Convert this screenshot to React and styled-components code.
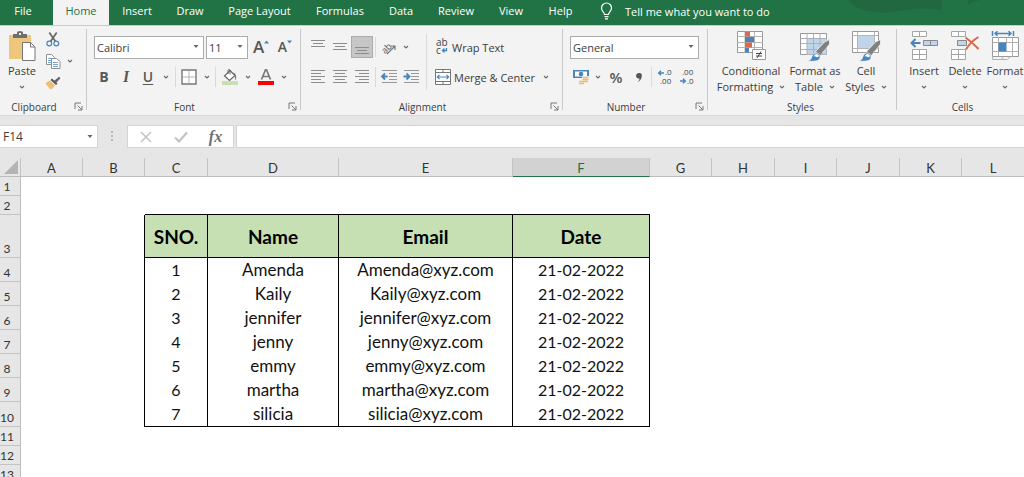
import React from "react";
import styled, { createGlobalStyle, css } from "styled-components";

const Global = createGlobalStyle`
  *, *::before, *::after { box-sizing: border-box; }
  html, body { margin: 0; overflow: hidden; background: #fff; }
  body, button, input, select {
    font-family: "Open Sans", "Noto Sans", sans-serif;
    font-size: 11px;
    color: #3c3c3c;
  }
`;

const green = "#217346";
const blue = "#4a84bd";

/* ---------- shell ---------- */

const Page = styled.div`
  display: flex;
  flex-direction: column;
  height: 100vh;
  overflow: hidden;
`;

const TabBar = styled.nav`
  display: flex;
  flex: none;
  height: 25px;
  background: ${green};
  overflow: hidden;
`;

const Tab = styled.button`
  flex: none;
  width: ${(p) => p.$w}px;
  padding: 0 0 3px;
  border: 0;
  background: ${(p) => (p.$active ? "#f3f3f3" : "transparent")};
  color: ${(p) => (p.$active ? green : "#fff")};
  margin-left: ${(p) => (p.$active ? 7 : 0)}px;
  line-height: 20px;
  text-align: center;
  white-space: nowrap;
`;

const TellMe = styled.button`
  display: flex;
  align-items: center;
  gap: 12px;
  flex: none;
  padding: 0 0 3px 15px;
  border: 0;
  background: transparent;
  color: #fff;
  white-space: nowrap;
`;

const Flourish = styled.svg`
  flex: 1;
  min-width: 0;
  height: 25px;
`;

/* ---------- ribbon ---------- */

const Ribbon = styled.div`
  display: flex;
  flex: none;
  height: 90px;
  background: #f3f3f3;
  border-top: 1px solid #bcd3c6;
  overflow: hidden;
`;

const Group = styled.section`
  display: flex;
  flex-direction: column;
  flex: none;
  width: ${(p) => p.$w}px;
`;

const GroupRule = styled.div`
  flex: none;
  width: 1px;
  margin: 3px 0 5px;
  background: #c9c9c9;
`;

const GroupBody = styled.div`
  display: flex;
  flex: 1;
  padding: 0 ${(p) => p.$pad || 0}px;
`;

const GroupFoot = styled.div`
  display: flex;
  align-items: center;
  height: 17px;
  padding-right: 3px;
`;

const GroupName = styled.span`
  flex: 1;
  padding-right: ${(p) => (p.$launcher ? 6 : 0)}px;
  text-align: center;
  font-size: 10px;
  line-height: 16px;
`;

const Launcher = styled.button`
  display: flex;
  padding: 0;
  border: 0;
  background: transparent;
`;

const Rows = styled.div`
  display: flex;
  flex-direction: column;
  gap: 8px;
  padding-top: 10px;
`;

const Row = styled.div`
  display: flex;
  align-items: center;
  height: 22px;
  gap: ${(p) => p.$gap || 0}px;
`;

const Tool = styled.button`
  display: flex;
  flex: none;
  align-items: center;
  justify-content: ${(p) => (p.$wide ? "flex-start" : "center")};
  gap: ${(p) => (p.$tight ? 0 : 3)}px;
  width: ${(p) => p.$w || 22}px;
  height: 22px;
  padding: 0;
  border: 1px solid ${(p) => (p.$on ? "#ababab" : "transparent")};
  background: ${(p) => (p.$on ? "#c6c6c6" : "transparent")};
  white-space: nowrap;
`;

const Glyph = styled.span`
  font-size: ${(p) => p.$size || 14}px;
  line-height: 20px;
  color: #585858;
  font-weight: ${(p) => (p.$bold ? 700 : 600)};
  ${(p) => p.$italic && css`font-style: italic; font-family: "Liberation Serif", serif;`}
  ${(p) => p.$under && css`text-decoration: underline; text-underline-offset: 2px;`}
`;

const Rule = styled.div`
  flex: none;
  width: 1px;
  height: 20px;
  margin: 0 ${(p) => p.$m || 0}px;
  background: #dadada;
`;

const TallRule = styled(Rule)`
  height: 56px;
  margin: 8px 7px 0 4px;
`;

const Big = styled.button`
  display: flex;
  flex-direction: column;
  align-items: center;
  flex: none;
  width: ${(p) => p.$w}px;
  padding: 5px 0 0;
  border: 0;
  background: transparent;
  line-height: 16px;
  white-space: nowrap;
`;

const BigLine = styled.span`
  display: flex;
  align-items: center;
  justify-content: center;
  gap: 6px;
  height: 16px;
`;

const SmallStack = styled.div`
  display: flex;
  flex-direction: column;
  padding-top: 2px;
`;

const Field = styled.div`
  display: grid;
  flex: none;
  align-items: center;
  width: ${(p) => p.$w}px;
  height: ${(p) => p.$h || 23}px;
  background: #fff;
  border: 1px solid #ababab;

  > select, > input, > svg { grid-area: 1 / 1; }
  > svg { justify-self: end; margin-right: 4px; pointer-events: none; }
`;

const Select = styled.select`
  appearance: none;
  width: 100%;
  height: 100%;
  padding: 0 2px;
  border: 0;
  background: transparent;
  outline: 0;
`;

/* ---------- formula bar ---------- */

const FormulaBar = styled.div`
  display: flex;
  flex: none;
  align-items: flex-start;
  height: 43px;
  padding-top: 9px;
  background: #e6e6e6;
  border-top: 1px solid #d8d8d8;
`;

const NameField = styled(Field)`
  border-color: #d4d4d4;
  border-left: 0;
`;

const TextInput = styled.input`
  width: 100%;
  height: 100%;
  padding: 0 3px;
  border: 0;
  background: transparent;
  font-size: 12px;
  outline: 0;
`;

const Grip = styled.svg`
  flex: none;
  margin: 5px 13px 0 12px;
`;

const EntryTools = styled.div`
  display: flex;
  align-items: center;
  justify-content: space-around;
  flex: none;
  width: 107px;
  height: 23px;
  margin-right: 2px;
  background: #fff;
  border: 1px solid #d4d4d4;
`;

const FormulaInput = styled(TextInput)`
  flex: 1;
  width: auto;
  min-width: 0;
  height: 23px;
  background: #fff;
  border: 1px solid #d4d4d4;
  border-right: 0;
`;

const Fx = styled.span`
  font: italic 700 16px/20px "Liberation Serif", serif;
  color: #707070;
`;

/* ---------- sheet ---------- */

const SheetArea = styled.main`
  flex: 1;
  min-height: 0;
  overflow: hidden;
`;

const Sheet = styled.table`
  table-layout: fixed;
  width: 1025px;
  border-collapse: separate;
  border-spacing: 0;
  font-family: Lato, "Open Sans", sans-serif;
  color: #111;
`;

const Col = styled.col`
  width: ${(p) => p.$w}px;
`;

const SheetRow = styled.tr`
  height: ${(p) => p.$h}px;
`;

const ColHead = styled.th`
  padding: 2px 0 0;
  font: 400 13px/14px Lato, sans-serif;
  color: ${(p) => (p.$on ? green : "#333")};
  background: ${(p) => (p.$on ? "#d2d2d2" : "#e6e6e6")};
  border-right: 1px solid #c3c3c3;
  border-bottom: 1px solid ${(p) => (p.$on ? green : "#bdbdbd")};
`;

const Corner = styled.th`
  padding: 0;
  background: #e6e6e6;
  border-right: 1px solid #c3c3c3;
  border-bottom: 1px solid #bdbdbd;
  vertical-align: bottom;

  > svg { display: block; margin: 0 0 2px 4px; }
`;

const RowHead = styled.th`
  padding: 0 6px 0 0;
  overflow: hidden;
  font: 400 12px/17px Lato, sans-serif;
  color: #333;
  vertical-align: bottom;
  background: #e6e6e6;
  border-right: 1px solid #bdbdbd;
  border-bottom: 1px solid #c3c3c3;
`;

const Cell = styled.td`
  padding: 0;
  overflow: hidden;
  text-align: center;
  font-size: ${(p) => (p.$word ? 17 : 16)}px;
  line-height: 22px;
  ${(p) => p.$title && css`padding-top: 2px; font-size: 19px; font-weight: 700; color: #000; background: #c6e0b4;`}
  ${(p) => p.$right && css`border-right: 1px solid #000;`}
  ${(p) => p.$bottom && css`border-bottom: 1px solid #000;`}
`;

/* ---------- icons ---------- */

const IconSvg = styled.svg`
  flex: none;
  overflow: visible;
`;

const Icon = ({ w = 16, h = w, children }) => (
  <IconSvg width={w} height={h} viewBox={`0 0 ${w} ${h}`} fill="none" aria-hidden="true">
    {children}
  </IconSvg>
);

const Chevron = () => (
  <Icon w={6} h={6}>
    <path d="M1 2 3 4 5 2" stroke="#6a6a6a" strokeWidth="1.1" />
  </Icon>
);

const Arrow = () => (
  <Icon w={6} h={4}>
    <path d="M.5 0h5L3 3z" fill="#666" />
  </Icon>
);

const Drop = ({ w = 12, label }) => (
  <Tool $w={w} aria-label={label}>
    <Chevron />
  </Tool>
);

const Bulb = () => (
  <Icon w={13} h={18}>
    <path d="M4.500 12.500c0-2-3-3-3-6.500a5 5 0 0 1 10 0c0 3.500-3 4.500-3 6.500zM4.500 14.700h4M5 16.800h3" stroke="#fff" strokeWidth="1.200" />
  </Icon>
);

const LauncherIcon = () => (
  <Icon w={9} h={9}>
    <path d="M1 7V1h6M3.500 3.500 7.500 7.500M8 4v4H4" stroke="#777" />
  </Icon>
);

const PasteIcon = () => (
  <Icon w={28} h={32}>
    <path d="M1 4h22v24H1z" fill="#eec67c" />
    <path d="M5 3h4V1.500Q9 0 12 0t3 1.500V3h4v4H5z" fill="#6f6f6f" />
    <path d="M11 2h2v2h-2z" fill="#eee" />
    <path d="M14.500 11.500h8l4.500 4.500v13.500H14.500z" fill="#fff" stroke="#777" />
    <path d="M22.500 11.500V16H27" stroke="#777" />
  </Icon>
);

const CutIcon = () => (
  <Icon w={14} h={15}>
    <path d="M3.300.5 9.500 9.500M10.700.5 4.500 9.500" stroke="#666" strokeWidth="1.700" />
    <circle cx="3.300" cy="11.500" r="2.400" stroke={blue} strokeWidth="1.200" />
    <circle cx="10.300" cy="11.500" r="2.400" stroke={blue} strokeWidth="1.200" />
  </Icon>
);

const CopyIcon = () => (
  <Icon w={15} h={15}>
    <path d="M.5.500h5l3 3v7h-8z" fill="#fff" stroke="#909090" />
    <path d="M2 4.500h4M2 6.500h4M2 8.500h3" stroke="#7ba5d0" />
    <path d="M5.500 4.500h5l3.500 3v7H5.500z" fill="#fff" stroke="#909090" />
    <path d="M7 8.500h5M7 10.500h5M7 12.500h5" stroke="#7ba5d0" />
  </Icon>
);

const BrushIcon = () => (
  <Icon w={16} h={14}>
    <path d="M.5 7 5 4.500l5 5L6.500 13.500Q4 13 .5 7z" fill="#eebf70" />
    <path d="M5.500 4 7 2.500l5.500 5L11 9z" fill="#555" />
    <path d="m9 5 5-4.200 1.500 1.400L11 7z" fill="#666" />
  </Icon>
);

const Lines = ({ rows }) => (
  <Icon w={14} h={16}>
    {rows.map(([x, y, w]) => (
      <path key={y} d={`M${x} ${y + 0.5}h${w}`} stroke="#8c8c8c" />
    ))}
  </Icon>
);

const GrowIcon = ({ size, up }) => (
  <>
    <Glyph $size={size}>A</Glyph>
    <Icon w={5} h={14}>
      <path d={up ? "M0 3.500h5L2.500.5z" : "M0 .5h5L2.500 3.500z"} fill={blue} />
    </Icon>
  </>
);

const BorderIcon = () => (
  <Icon w={16}>
    <path d="M1 1h14v14H1z" fill="#fff" stroke="#777" strokeWidth="1.400" />
    <path d="M8 2v12M2 8h12" stroke="#b5b5b5" />
  </Icon>
);

const FillIcon = () => (
  <Icon w={16}>
    <path d="M8 1.500 13 6.500 7.500 11.500 2.500 7z" fill="#fff" stroke="#666" strokeWidth="1.200" />
    <path d="M6 5V1.500Q6 .5 7 .5t1 1v4" stroke="#666" />
    <path d="M11.500 3.500Q15 5 14 11q-1.500-1-1-4z" fill={blue} />
    <path d="M0 12h16v4H0z" fill="#c6e0b4" />
  </Icon>
);

const FontColorIcon = () => (
  <Icon w={16}>
    <path d="M3.500 10.500 7.500.8h1L12.500 10.500M5 7.500h6" stroke="#777" strokeWidth="1.700" />
    <path d="M0 12h16v4H0z" fill="#f00" />
  </Icon>
);

const OrientIcon = () => (
  <Icon w={15} h={15}>
    <text x="-1" y="11" transform="rotate(-45 5 8)" fontSize="9" fontFamily="Open Sans" fill="#555">ab</text>
    <path d="M5 14 12.500 6.500M9 6h4v4" stroke="#777" strokeWidth="1.200" />
  </Icon>
);

const WrapIcon = () => (
  <Icon w={14} h={16}>
    <text x="1" y="7" fontSize="10" fontFamily="Open Sans" fill="#444">ab</text>
    <text x="1" y="15" fontSize="10" fontFamily="Open Sans" fill="#444">c</text>
    <path d="M11.500 9v2.500H8M9.500 9.500l-2 2 2 2" stroke={blue} strokeWidth="1.300" />
  </Icon>
);

const MergeIcon = () => (
  <Icon w={16}>
    <path d="M.5.500h15v15H.5zM.5 3.500h15M.5 12.500h15M8 .5v3M8 12.500v3" fill="#fff" stroke="#777" />
    <path d="M2.500 8h11M4.500 5.800 2.300 8l2.200 2.200M11.500 5.800 13.700 8l-2.200 2.200" stroke={blue} strokeWidth="1.200" />
  </Icon>
);

const IndentIcon = ({ right }) => (
  <Icon w={16}>
    <path d="M1 1.500h15M8 4.500h8M8 7.500h8M8 10.500h8M1 13.500h15" stroke="#979797" />
    <path d={right ? "M.5 7.500h5M3.500 4.500l3 3-3 3" : "M1.500 7.500h5M4 4.500l-3 3 3 3"} stroke={blue} strokeWidth="1.800" />
  </Icon>
);

const MoneyIcon = () => (
  <Icon w={16}>
    <path d="M0 1h16v8H0z" fill={blue} />
    <path d="M2 2.500h12v5H2z" fill="#fff" />
    <circle cx="8" cy="5" r="2.300" fill={blue} />
    <path d="M9 7h7v8H6v-5h3z" fill="#f3f3f3" />
    <path d="M9.500 8.500h6M9.500 10.500h6M6 12.500h5M11 12.500h4M6 14.500h5" stroke="#e9bc74" strokeWidth="1.500" />
  </Icon>
);

const DecimalIcon = ({ less }) => (
  <Icon w={16}>
    <text x={less ? 3 : 8} y="6" fontSize="8" fontFamily="Open Sans" fill="#444">{less ? ".00" : ".0"}</text>
    <text x={less ? 8 : 3} y="15" fontSize="8" fontFamily="Open Sans" fill="#444">{less ? ".0" : ".00"}</text>
    <path d={less ? "M1 12h5M4 9.800l2.200 2.200L4 14.200" : "M2 4h5M4 1.800 1.800 4 4 6.200"} stroke={blue} strokeWidth="1.500" />
  </Icon>
);

const CommaIcon = () => (
  <Icon w={7} h={11}>
    <path d="M3.200 1a2.500 2.500 0 0 1 2.600 2.700c0 3-1.500 5-4.300 6.300 1.500-1.300 2-2.300 2-3.500A2.800 2.800 0 1 1 3.200 1z" fill="#555" />
  </Icon>
);

const ConditionalIcon = () => (
  <Icon w={30} h={32}>
    <path d="M1.500.5h25v21h-25z" fill="#fff" stroke="#999" />
    <path d="M1.500 5.500h25M1.500 11.500h25M1.500 16.500h25M9 .5v21M18.500.5v21" stroke="#b5b5b5" />
    <path d="M9 1h5v4.500H9zM9 11.500h7v5H9z" fill="#d9694a" />
    <path d="M9 6h9v5H9zM9 17h4v4.500H9z" fill={blue} />
    <path d="M16.500 18.500h13v10h-13z" fill="#fff" stroke="#999" />
    <path d="M20 22.500h6M20 25h6M25 20.500l-4 6.500" stroke="#444" />
  </Icon>
);

const PaintBrush = () => (
  <>
    <path d="m17.500 19.500 8-8.500 5-2.500v4.500l-4.500 6-4.500 4z" fill="#808080" stroke="#f3f3f3" strokeWidth=".8" />
    <path d="M17 20.500 20 18l3.500 3.500-2.500 3z" fill="#808080" />
    <path d="M9 30q3.500-1.500 4-4.500t4-3.500 4 3-2.500 4.500-9.500.5z" fill={blue} stroke="#f3f3f3" strokeWidth=".6" />
    <path d="M14.500 25.500q1-2.500 3-2.500t2.500 2q-1 2-2.500 1t-3-.5z" fill="#fff" />
  </>
);

const FormatTableIcon = () => (
  <Icon w={32}>
    <path d="M1.500 2.500h26v21h-26z" fill="#fff" stroke="#999" />
    <path d="M8 8h19.500v15.500H8z" fill="#c0d4ea" />
    <path d="M1.500 7.500h26M1.500 12.500h26M1.500 18.500h26M8 2.500v21M14.500 2.500v21M21 2.500v21" stroke="#aab1b8" />
    <PaintBrush />
  </Icon>
);

const CellStylesIcon = () => (
  <Icon w={32}>
    <path d="M2.500.5h26v21h-26z" fill="#fff" stroke="#999" />
    <path d="M2.500 4.500h26M2.500 17.500h26M7.500.5v21M24.500.5v21" stroke="#b5b5b5" />
    <path d="M8 5h16v12H8z" fill="#c0d4ea" />
    <PaintBrush />
  </Icon>
);

const InsertIcon = () => (
  <Icon w={30} h={32}>
    <path d="M3.500.5h14v5h-14zM3.500 18.500h14v10h-14zM3.500 23.500h14M10.500.5v5M10.500 18.500v10" fill="#fff" stroke="#a5a5a5" />
    <path d="M14.500 9.500h14v5h-14zM21.500 9.500v5" fill="#c0d4ea" stroke="#888" />
    <path d="M2.500 12h9M6.500 8l-4 4 4 4" stroke={blue} strokeWidth="2" />
  </Icon>
);

const DeleteIcon = () => (
  <Icon w={30} h={32}>
    <path d="M1.500.5h14v5h-14zM1.500 18.500h14v10h-14zM1.500 23.500h14M8.500.5v5M8.500 18.500v10" fill="#fff" stroke="#a5a5a5" />
    <path d="M7.500 9.500h9v5h-9z" fill="#c0d4ea" stroke="#888" />
    <path d="M15.500 6.500q7 5 13 11.500M28.500 6Q20 11 16 18.500" stroke="#dc6647" strokeWidth="2" />
  </Icon>
);

const FormatIcon = () => (
  <Icon w={30} h={32}>
    <path d="M2.500 0v5M23.500 0v5M4.500 2.500h17M7.500.2 5 2.500l2.500 2.300M18.500.2 21 2.500l-2.500 2.300" stroke={blue} strokeWidth="1.500" />
    <path d="M2.500 6.500h26v19h-26z" fill="#fff" stroke="#999" />
    <path d="M2.500 11.500h26M2.500 20.500h26M8.500 6.500v19M16.500 6.500v5M22.500 6.500v19M2.500 25.500v3h9l2-3M11.500 28.500h6l3-3" stroke="#b0b0b0" />
    <path d="M8.500 11.500h8v9h-8z" fill={blue} />
  </Icon>
);

/* ---------- data ---------- */

const tabs = [
  ["File", 46],
  ["Home", 56],
  ["Insert", 56],
  ["Draw", 50],
  ["Page Layout", 89],
  ["Formulas", 72],
  ["Data", 50],
  ["Review", 60],
  ["View", 50],
  ["Help", 49],
];

const columns = [
  ["A", 62], ["B", 62], ["C", 63], ["D", 131], ["E", 174], ["F", 137],
  ["G", 62], ["H", 63], ["I", 62], ["J", 63], ["K", 62], ["L", 63],
];

const rowHeights = [19, 19, 43, 24, 24, 24, 24, 24, 24, 25, 19, 19, 19];

const people = ["Amenda", "Kaily", "jennifer", "jenny", "emmy", "martha", "silicia"];

const headings = { C: "SNO.", D: "Name", E: "Email", F: "Date" };

function valueAt(col, row) {
  if (row === 3) return headings[col];
  const name = people[row - 4];
  if (!name) return undefined;
  return { C: row - 3, D: name, E: `${name}@xyz.com`, F: "21-02-2022" }[col];
}

/* ---------- parts ---------- */

const RibbonGroup = ({ name, w, launcher, children, last }) => (
  <>
    <Group $w={w} aria-label={name}>
      {children}
      <GroupFoot>
        <GroupName $launcher={launcher}>{name}</GroupName>
        {launcher && (
          <Launcher aria-label={`${name} settings`}>
            <LauncherIcon />
          </Launcher>
        )}
      </GroupFoot>
    </Group>
    {!last && <GroupRule />}
  </>
);

const Picker = ({ label, value, w }) => (
  <Field $w={w}>
    <Select aria-label={label} defaultValue={value}>
      <option>{value}</option>
    </Select>
    <Arrow />
  </Field>
);

const BigTool = ({ w, icon, line1, line2 }) => (
  <Big $w={w}>
    {icon}
    <BigLine>{line1}</BigLine>
    <BigLine>
      {line2}
      <Chevron />
    </BigLine>
  </Big>
);

export default function App() {
  return (
    <Page>
      <Global />
      <TabBar>
        {tabs.map(([name, w]) => (
          <Tab key={name} $w={w} $active={name === "Home"}>{name}</Tab>
        ))}
        <TellMe>
          <Bulb />
          Tell me what you want to do
        </TellMe>
        <Flourish viewBox="0 0 240 25" preserveAspectRatio="xMaxYMin slice" aria-hidden="true">
          <path d="M74 0q4 6 16 10 18 4 34 0 22-4 38 0V0z" fill="#216840" />
          <path d="M187 5q4-4 12-5h-12z" fill="#216840" />
        </Flourish>
      </TabBar>

      <Ribbon>
        <RibbonGroup name="Clipboard" w={86} launcher>
          <GroupBody>
            <BigTool w={44} icon={<PasteIcon />} line1="Paste" />
            <SmallStack>
              <Tool $w={18} aria-label="Cut"><CutIcon /></Tool>
              <Row>
                <Tool $w={18} aria-label="Copy"><CopyIcon /></Tool>
                <Drop w={16} label="Copy options" />
              </Row>
              <Tool $w={18} aria-label="Format painter"><BrushIcon /></Tool>
            </SmallStack>
          </GroupBody>
        </RibbonGroup>

        <RibbonGroup name="Font" w={213} launcher>
          <GroupBody $pad={7}>
            <Rows>
              <Row $gap={2}>
                <Picker label="Font" value="Calibri" w={110} />
                <Picker label="Font size" value="11" w={42} />
                <Tool $tight aria-label="Increase font size"><GrowIcon size={17} up /></Tool>
                <Tool $tight aria-label="Decrease font size"><GrowIcon size={14} /></Tool>
              </Row>
              <Row>
                <Tool $w={20}><Glyph $bold>B</Glyph></Tool>
                <Tool $w={24}><Glyph $italic $bold $size={16}>I</Glyph></Tool>
                <Tool $w={20}><Glyph $under>U</Glyph></Tool>
                <Drop w={16} label="Underline options" />
                <Rule $m={1} />
                <Tool $w={24} aria-label="Borders"><BorderIcon /></Tool>
                <Drop label="Border options" />
                <Rule $m={2} />
                <Tool $w={24} aria-label="Fill color"><FillIcon /></Tool>
                <Drop label="Fill options" />
                <Tool $w={24} aria-label="Font color"><FontColorIcon /></Tool>
                <Drop label="Font color options" />
              </Row>
            </Rows>
          </GroupBody>
        </RibbonGroup>

        <RibbonGroup name="Alignment" w={261} launcher>
          <GroupBody $pad={6}>
            <Rows>
              <Row>
                <Tool aria-label="Top align"><Lines rows={[[0, 1, 14], [2, 4, 10], [0, 7, 14]]} /></Tool>
                <Tool aria-label="Middle align"><Lines rows={[[0, 4, 14], [2, 7, 10], [0, 10, 14]]} /></Tool>
                <Tool $on aria-label="Bottom align"><Lines rows={[[0, 8, 14], [2, 11, 10], [0, 14, 14]]} /></Tool>
                <Rule $m={2} />
                <Tool aria-label="Orientation"><OrientIcon /></Tool>
                <Drop label="Orientation options" />
              </Row>
              <Row>
                <Tool aria-label="Align left"><Lines rows={[[0, 1, 14], [0, 4, 10], [0, 7, 14], [0, 10, 10], [0, 13, 14]]} /></Tool>
                <Tool aria-label="Center"><Lines rows={[[0, 1, 14], [2, 4, 10], [0, 7, 14], [2, 10, 10], [0, 13, 14]]} /></Tool>
                <Tool aria-label="Align right"><Lines rows={[[0, 1, 14], [4, 4, 10], [0, 7, 14], [4, 10, 10], [0, 13, 14]]} /></Tool>
                <Rule $m={2} />
                <Tool aria-label="Decrease indent"><IndentIcon /></Tool>
                <Tool aria-label="Increase indent"><IndentIcon right /></Tool>
              </Row>
            </Rows>
            <TallRule />
            <Rows>
              <Row><Tool $w={104} $wide><WrapIcon />Wrap Text</Tool></Row>
              <Row>
                <Tool $w={104} $wide><MergeIcon />Merge &amp; Center</Tool>
                <Drop w={16} label="Merge options" />
              </Row>
            </Rows>
          </GroupBody>
        </RibbonGroup>

        <RibbonGroup name="Number" w={144} launcher>
          <GroupBody $pad={7}>
            <Rows>
              <Row><Picker label="Number format" value="General" w={129} /></Row>
              <Row>
                <Tool aria-label="Accounting format"><MoneyIcon /></Tool>
                <Drop label="Accounting options" />
                <Tool $w={24}><Glyph $size={15}>%</Glyph></Tool>
                <Tool aria-label="Comma style"><CommaIcon /></Tool>
                <Rule $m={1} />
                <Tool $w={24} aria-label="Increase decimal"><DecimalIcon /></Tool>
                <Tool $w={20} aria-label="Decrease decimal"><DecimalIcon less /></Tool>
              </Row>
            </Rows>
          </GroupBody>
        </RibbonGroup>

        <RibbonGroup name="Styles" w={188}>
          <GroupBody $pad={6}>
            <BigTool w={74} icon={<ConditionalIcon />} line1="Conditional" line2="Formatting" />
            <BigTool w={54} icon={<FormatTableIcon />} line1="Format as" line2="Table" />
            <BigTool w={48} icon={<CellStylesIcon />} line1="Cell" line2="Styles" />
          </GroupBody>
        </RibbonGroup>

        <RibbonGroup name="Cells" w={134} last>
          <GroupBody $pad={6}>
            <BigTool w={42} icon={<InsertIcon />} line1="Insert" />
            <BigTool w={40} icon={<DeleteIcon />} line1="Delete" />
            <BigTool w={40} icon={<FormatIcon />} line1="Format" />
          </GroupBody>
        </RibbonGroup>
      </Ribbon>

      <FormulaBar>
        <NameField $w={98}>
          <TextInput aria-label="Name box" defaultValue="F14" />
          <Arrow />
        </NameField>
        <Grip width="4" height="13" viewBox="0 0 4 13" aria-hidden="true">
          <path d="M1 1h2v2H1zM1 5h2v2H1zM1 9h2v2H1z" fill="#b5b5b5" />
        </Grip>
        <EntryTools>
          <Tool aria-label="Cancel">
            <Icon w={12}><path d="m1 1 10 10M11 1 1 11" stroke="#c2c2c2" strokeWidth="1.500" /></Icon>
          </Tool>
          <Tool aria-label="Enter">
            <Icon w={14} h={12}><path d="m1 6.500 4 4L13 1.500" stroke="#c2c2c2" strokeWidth="2.200" /></Icon>
          </Tool>
          <Tool aria-label="Insert function"><Fx>fx</Fx></Tool>
        </EntryTools>
        <FormulaInput aria-label="Formula" />
      </FormulaBar>

      <SheetArea>
        <Sheet>
          <colgroup>
            <Col $w={21} />
            {columns.map(([name, w]) => <Col key={name} $w={w} />)}
          </colgroup>
          <thead>
            <SheetRow $h={19}>
              <Corner aria-label="Select all">
                <Icon w={14} h={14}><path d="M14 0v14H0z" fill="#b4b4b4" /></Icon>
              </Corner>
              {columns.map(([name]) => (
                <ColHead key={name} $on={name === "F"}>{name}</ColHead>
              ))}
            </SheetRow>
          </thead>
          <tbody>
            {rowHeights.map((h, i) => {
              const row = i + 1;
              const inRows = row >= 3 && row <= 10;
              return (
                <SheetRow key={row} $h={h}>
                  <RowHead>{row}</RowHead>
                  {columns.map(([col]) => (
                    <Cell
                      key={col}
                      $title={row === 3 && headings[col]}
                      $word={col === "D" || col === "E"}
                      $right={inRows && "BCDEF".includes(col)}
                      $bottom={"CDEF".includes(col) && [2, 3, 10].includes(row)}
                    >
                      {valueAt(col, row)}
                    </Cell>
                  ))}
                </SheetRow>
              );
            })}
          </tbody>
        </Sheet>
      </SheetArea>
    </Page>
  );
}
